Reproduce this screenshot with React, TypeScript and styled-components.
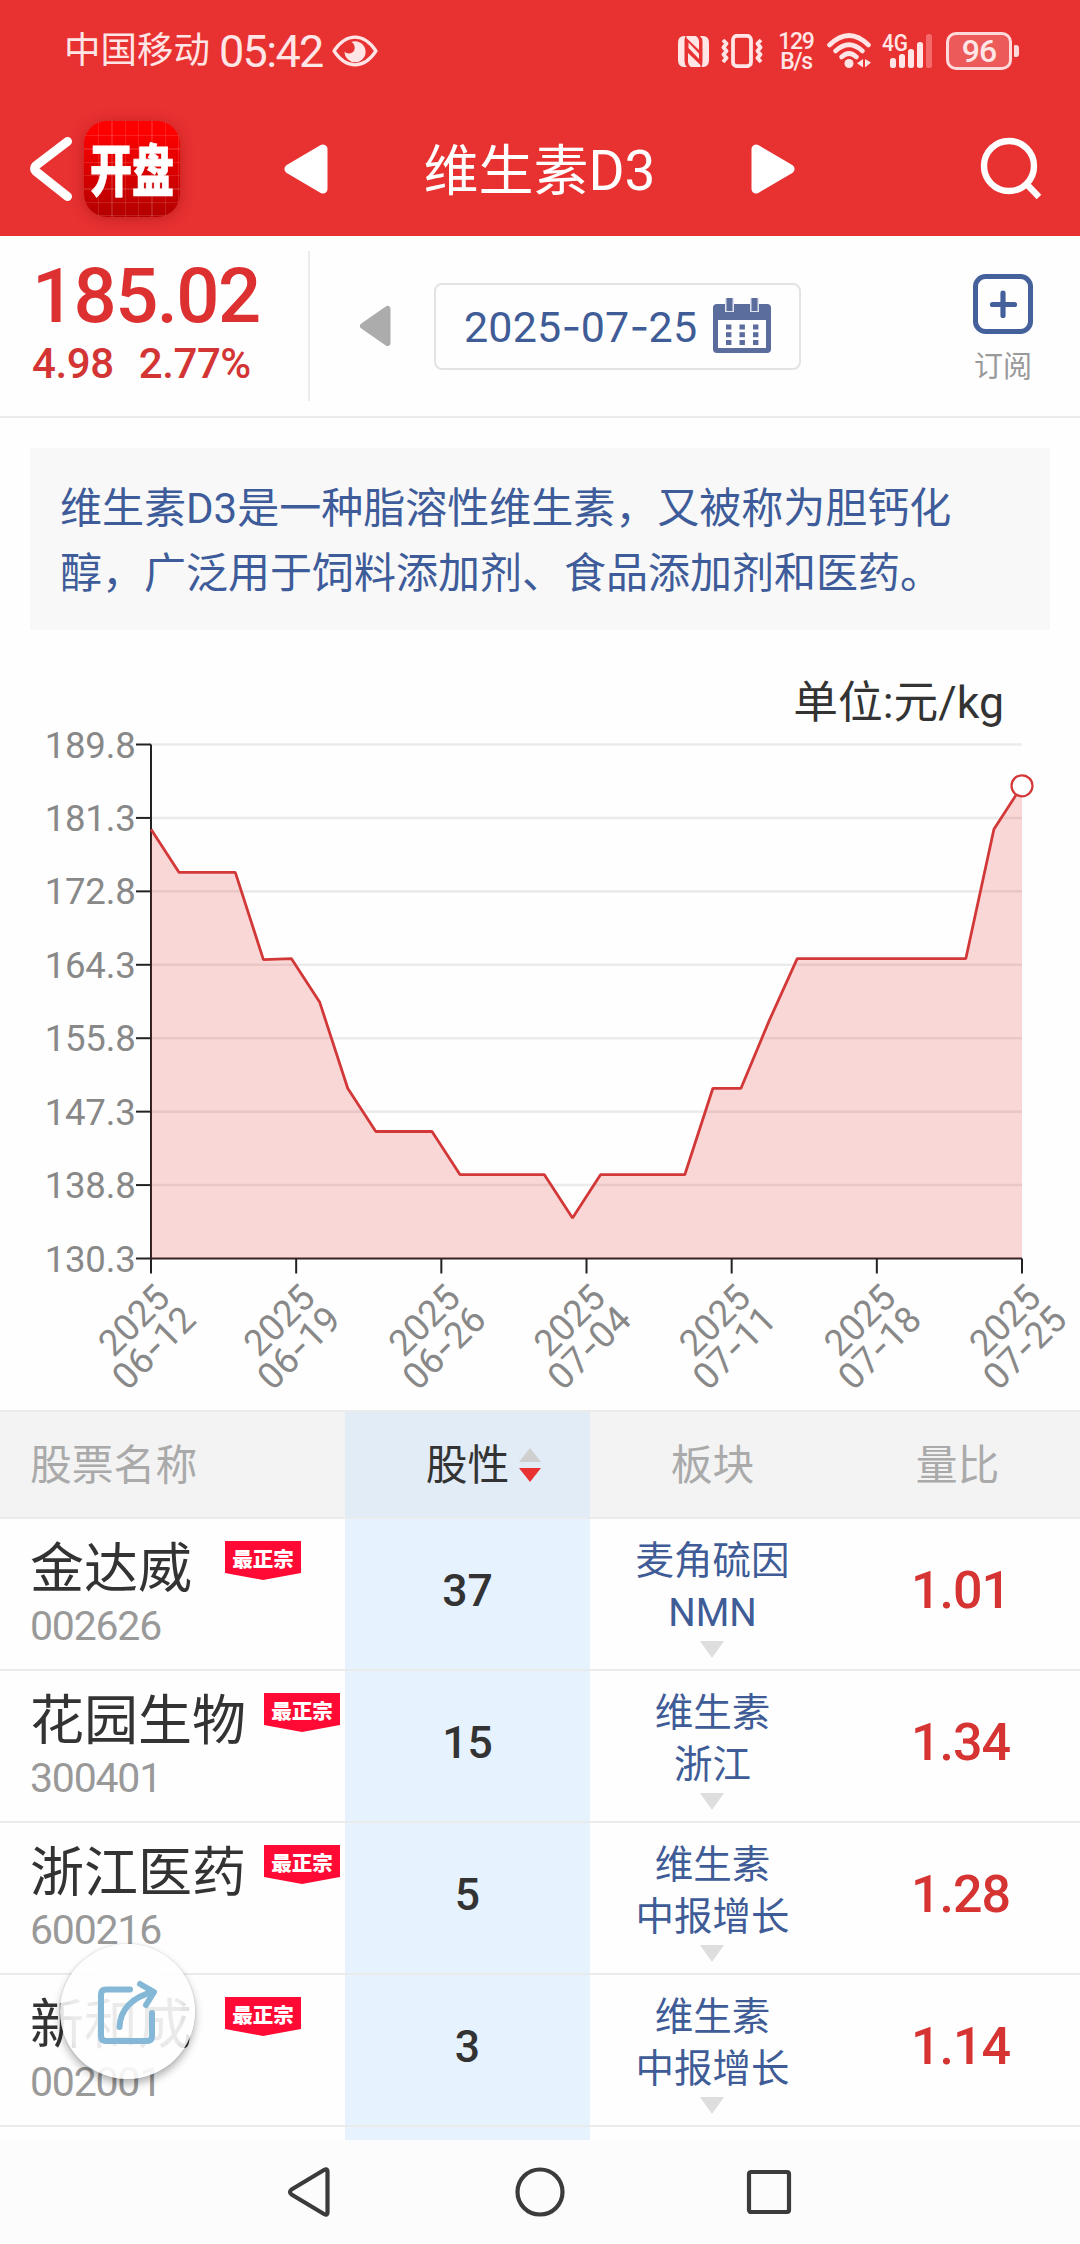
import React from "react";
import styled, { createGlobalStyle } from "styled-components";

const GlobalStyle = createGlobalStyle`
  * { box-sizing: border-box; }
  html, body { margin: 0; padding: 0; background: #fff; }
  body { font-family: Roboto, "Noto Sans CJK SC", sans-serif; color: #333; }
`;

const Page = styled.div`
  position: relative;
  width: 1080px;
  height: 2244px;
  overflow: hidden;
  display: flex;
  flex-direction: column;
  background: #fefefe;
`;

/* ---------- status bar ---------- */

const RedArea = styled.header`
  height: 236px;
  background: #e83131;
  flex: none;
`;

const StatusBar = styled.div`
  height: 102px;
  display: flex;
  justify-content: space-between;
  align-items: center;
  padding: 0 61px 0 64px;
  color: #ffe5e5;
`;

const StatusGroup = styled.div`
  display: flex;
  align-items: center;
`;

const Carrier = styled.span`
  font-size: 36.5px;
  line-height: 44px;
`;

const Clock = styled.span`
  margin-left: 9px;
  font-size: 45px;
  line-height: 44px;
  letter-spacing: -1.7px;
  padding-top: 1px;
`;

const Speed = styled.div`
  width: 36px;
  margin: 2px 13px 0 15px;
  display: flex;
  flex-direction: column;
  align-items: center;
  font-size: 23px;
  font-weight: 500;
  line-height: 20px;
  letter-spacing: -1.3px;
`;

const Battery = styled.div`
  width: 66px;
  height: 38px;
  margin-left: 12px;
  border: 3px solid #ffdada;
  border-radius: 10px;
  background: #ec5a5a;
  display: flex;
  align-items: center;
  justify-content: center;
  font-size: 32px;
  font-weight: 500;
  line-height: 32px;
  letter-spacing: -1px;
`;

const BatteryNub = styled.div`
  width: 5px;
  height: 12px;
  margin-left: 2px;
  border-radius: 1px 3px 3px 1px;
  background: #ffdada;
`;

/* ---------- title bar ---------- */

const TitleBar = styled.div`
  height: 134px;
  display: flex;
  align-items: center;
  justify-content: space-between;
  padding: 0 30px 0 29px;
`;

const TitleSide = styled.div`
  width: 155px;
  display: flex;
  align-items: center;
  gap: 11px;
  &:last-child {
    justify-content: flex-end;
    padding-right: 6px;
  }
`;

const AppLogo = styled.div`
  width: 96px;
  height: 96px;
  border-radius: 23px;
  display: flex;
  align-items: center;
  justify-content: center;
  background:
    repeating-linear-gradient(90deg, transparent 0 12px, rgba(255, 255, 255, 0.12) 12px 13.3px) 2px 0,
    repeating-linear-gradient(180deg, transparent 0 12px, rgba(255, 255, 255, 0.12) 12px 13.3px) 0 2px,
    linear-gradient(180deg, #ff0000 10%, #b60000 95%);
  box-shadow: 0 2px 14px rgba(120, 0, 0, 0.35);
`;

const LogoText = styled.span`
  font-family: "Noto Sans CJK SC", sans-serif;
  font-weight: 900;
  font-size: 42px;
  line-height: 42px;
  color: #fff;
  -webkit-text-stroke: 0.6px #fff;
  transform: translateY(-2px) scaleY(1.32);
`;

const TitleCenter = styled.div`
  width: 512px;
  display: flex;
  align-items: center;
  justify-content: space-between;
`;

const Title = styled.h1`
  margin: 4px 0 0;
  font-size: 55px;
  line-height: 64px;
  font-weight: 400;
  color: #fff;
`;

/* ---------- quote bar ---------- */

const QuoteBar = styled.section`
  height: 182px;
  flex: none;
  display: flex;
  align-items: center;
  border-bottom: 2px solid #ebebeb;
`;

const PriceBlock = styled.div`
  width: 310px;
  height: 150px;
  border-right: 2px solid #ebebeb;
  padding-left: 32px;
  color: #dd3031;
  white-space: pre;
`;

const Price = styled.div`
  margin-top: 5px;
  font-size: 76px;
  line-height: 80px;
  font-weight: 500;
  letter-spacing: -1.6px;
`;

const Change = styled.div`
  margin-top: 5px;
  display: flex;
  gap: 25px;
  font-size: 42px;
  line-height: 46px;
  font-weight: 500;
  letter-spacing: -0.4px;
  color: #d33535;
`;

const PrevDay = styled.svg`
  margin-left: 49px;
  flex: none;
`;

const DateBox = styled.div`
  margin-left: 43px;
  width: 367px;
  height: 87px;
  border: 2px solid #e3e3e3;
  border-radius: 8px;
  display: flex;
  align-items: center;
  padding: 0 28px;
  justify-content: space-between;
  font-size: 43px;
  color: #3f5c97;
  line-height: 48px;
`;

const DateText = styled.span`
  letter-spacing: 0.2px;
`;

const Dash = styled.span`
  font-family: Inter, Roboto, sans-serif;
  letter-spacing: -0.6px;
`;

const Subscribe = styled.div`
  margin-left: 157px;
  width: 90px;
  display: flex;
  flex-direction: column;
  align-items: center;
  gap: 15px;
  font-size: 29px;
  line-height: 36px;
  color: #999;
  padding-top: 6px;
`;

/* ---------- description and chart ---------- */

const Description = styled.p`
  margin: 30px 30px 0;
  height: 182px;
  flex: none;
  padding: 28px 31px 24px 30px;
  background: #f8f8f8;
  color: #3e5c99;
  font-size: 42px;
  line-height: 65px;
`;

const UnitLabel = styled.div`
  height: 90px;
  flex: none;
  padding: 46px 76px 0 0;
  text-align: right;
  font-size: 44.7px;
  line-height: 54px;
  white-space: nowrap;
  color: #333;
`;

const ChartSvg = styled.svg`
  display: block;
  flex: none;
  overflow: visible;
  font-family: Roboto, sans-serif;
  font-size: 36.6px;
`;

/* ---------- table ---------- */

const Table = styled.section`
  flex: 1;
  min-height: 0;
  display: flex;
  flex-direction: column;
  overflow: hidden;
  border-top: 2px solid #ebebeb;
`;

const Row = styled.div<{ $head?: boolean; $tail?: boolean }>`
  flex: none;
  height: ${(p) => (p.$head ? 107 : p.$tail ? 13 : 152)}px;
  display: grid;
  grid-template-columns: 345px 245px 245px 245px;
  background: ${(p) => (p.$head ? "#f3f3f3" : "#fefefe")};
  color: ${(p) => (p.$head ? "#aaa" : "#333")};
  font-size: 41.8px;
  border-bottom: ${(p) => (p.$tail ? 0 : 2)}px solid #ebebeb;
`;

const Cell = styled.div<{ $tint?: string; $start?: boolean }>`
  display: flex;
  align-items: center;
  justify-content: ${(p) => (p.$start ? "flex-start" : "center")};
  padding-left: ${(p) => (p.$start ? 30 : 0)}px;
  background: ${(p) => p.$tint ?? "transparent"};
`;

const HeadLabel = styled.span<{ $active?: boolean }>`
  margin-top: -5px;
  color: ${(p) => (p.$active ? "#333" : "inherit")};
`;

const SortArrows = styled.svg`
  margin: 0 -32px 0 10px;
`;

const StockCell = styled.div`
  display: flex;
  flex-direction: column;
  padding: 17px 0 0 31px;
`;

const NameLine = styled.div`
  display: flex;
  gap: 17px;
  align-items: flex-start;
`;

const StockName = styled.span`
  min-width: 177px;
  padding-top: 3px;
  margin-left: -1px;
  margin-right: 1px;
  font-size: 54px;
  line-height: 62px;
  white-space: nowrap;
`;

const StockCode = styled.span`
  margin-top: 2px;
  font-size: 41px;
  line-height: 46px;
  letter-spacing: -1.2px;
  margin-left: -1px;
  color: #999;
`;

const Flag = styled.span`
  width: 76px;
  height: 39px;
  margin-top: 5px;
  background: #ff0a35;
  clip-path: polygon(0 0, 100% 0, 100% 82%, 50% 100%, 0 82%);
  display: flex;
  justify-content: center;
  padding-top: 3px;
  font-family: "Noto Sans CJK SC", sans-serif;
  font-size: 20.5px;
  line-height: 28px;
  font-weight: 900;
  color: #fff;
`;

const Score = styled.span`
  font-size: 44.5px;
  font-weight: 500;
  margin-top: -7px;
`;

const Ratio = styled.span`
  width: 100px;
  margin: -7px 0 0 7px;
  font-size: 52px;
  font-weight: 500;
  letter-spacing: -1px;
  color: #d63333;
`;

const Sectors = styled.div`
  display: flex;
  flex-direction: column;
  align-items: center;
  padding-top: 16px;
  font-size: 38.5px;
  line-height: 52px;
  color: #3f5c97;
`;

const SectorMore = styled.svg`
  margin-top: 2px;
  margin-right: 2px;
`;

/* ---------- overlay and navigation ---------- */

const ShareButton = styled.button`
  position: absolute;
  left: 60px;
  top: 1944px;
  width: 135px;
  height: 135px;
  padding: 0;
  border: 0;
  border-radius: 50%;
  background: rgba(254, 254, 254, 0.87);
  box-shadow: 0 5px 9px rgba(0, 0, 0, 0.3), 0 0 2px rgba(0, 0, 0, 0.2);
`;

const NavBar = styled.nav`
  height: 104px;
  flex: none;
  background: #fcfcfc;
  display: flex;
  align-items: center;
  justify-content: center;
  gap: 180px;
`;

/* ---------- data ---------- */

const prices = [
  180, 175, 175, 175, 164.9, 165, 160, 150, 145, 145, 145, 140, 140, 140, 140, 135,
  140, 140, 140, 140, 150, 150, 157.8, 165, 165, 165, 165, 165, 165, 165, 180, 185.02,
];
const yTicks = ["189.8", "181.3", "172.8", "164.3", "155.8", "147.3", "138.8", "130.3"];
const xTicks = ["06-12", "06-19", "06-26", "07-04", "07-11", "07-18", "07-25"];

const stocks = [
  { name: "金达威", code: "002626", score: 37, sectors: ["麦角硫因", "NMN"], ratio: "1.01" },
  { name: "花园生物", code: "300401", score: 15, sectors: ["维生素", "浙江"], ratio: "1.34" },
  { name: "浙江医药", code: "600216", score: 5, sectors: ["维生素", "中报增长"], ratio: "1.28" },
  { name: "新和成", code: "002001", score: 3, sectors: ["维生素", "中报增长"], ratio: "1.14" },
];

/* ---------- pieces ---------- */

const EyeSvg = styled.svg`
  margin-left: 9px;
`;

const EyeIcon = () => (
  <EyeSvg width="46" height="34" viewBox="0 0 46 34">
    <path d="M2 17C8 8 15 3.2 23 3.2S38 8 44 17C38 26 31 30.8 23 30.8S8 26 2 17Z" fill="none" stroke="#ffe5e5" strokeWidth="3.2" strokeLinejoin="round" />
    <path d="M21 7.5A10.5 10.5 0 1 1 12.6 17.5C14.5 20.5 21.5 20 22.5 15.5C23 12.5 22.5 10 19.5 8Z" fill="#ffe5e5" />
  </EyeSvg>
);

const NfcIcon = () => (
  <svg width="31" height="33" viewBox="0 0 31 33">
    <path d="M7.500 1H6Q0 1 0 8V25Q0 32 6 32H9Q6.500 30 6.500 26V7Q6.500 3 7.500 1Z" fill="#ffe5e5" />
    <path d="M23.500 32H25Q31 32 31 25V8Q31 1 25 1H22Q24.500 3 24.500 7V26Q24.500 30 23.500 32Z" fill="#ffe5e5" />
    <path d="M8.500 1H18Q21 3 21 7V15L8.500 3ZM22.500 32H13Q10 30 10 26V18L22.500 30Z" fill="#ffe5e5" />
    <path d="M10.500 7.500L21 18.500V24L10.500 13Z" fill="#ffe5e5" />
  </svg>
);

const VibrateSvg = styled.svg`
  margin-left: 12px;
`;

const VibrateIcon = () => (
  <VibrateSvg width="42" height="34" viewBox="0 0 42 34" fill="none" stroke="#ffe5e5">
    <rect x="12" y="1.800" width="18" height="30.400" rx="4" strokeWidth="3.800" />
    <path d="M2 6L5.500 9.500L2.500 13.500L5.500 17L2.500 20.500L5.500 24L2 28M40 6L36.500 9.500L39.500 13.500L36.500 17L39.500 20.500L36.500 24L40 28" strokeWidth="3.800" strokeLinejoin="round" />
  </VibrateSvg>
);

const WifiIcon = () => (
  <svg width="45" height="36" viewBox="0 0 45 36" fill="none" stroke="#ffe5e5" strokeLinecap="round">
    <path d="M2.500 12Q22 -7 41.500 12" strokeWidth="4.600" />
    <path d="M8.500 18Q22 5.500 35.500 18" strokeWidth="4.600" />
    <path d="M14.500 24Q22 17 29.500 24" strokeWidth="4.600" />
    <circle cx="22" cy="30.500" r="4.500" fill="#ffe5e5" stroke="none" />
    <path d="M36 26V34.500L30 30.300ZM38 26V34.500L44 29.500Z" fill="#ffe5e5" stroke="none" />
  </svg>
);

const SignalSvg = styled.svg`
  margin-left: 10px;
  overflow: visible;
`;

const SignalIcon = () => (
  <SignalSvg width="52" height="36" viewBox="0 0 52 36" fill="#ffe5e5">
    <text x="0" y="18" fontSize="24" fontWeight="500" textLength="26" lengthAdjust="spacingAndGlyphs">4G</text>
    <rect x="8" y="25" width="6" height="10" rx="2.500" />
    <rect x="17" y="21" width="6" height="14" rx="2.500" />
    <rect x="26" y="16" width="6" height="19" rx="2.500" />
    <rect x="35" y="9" width="6" height="26" rx="2.500" />
    <rect x="44" y="1" width="6" height="34" rx="2.500" fill="#f46a6a" />
  </SignalSvg>
);

const CalendarIcon = () => (
  <svg width="58" height="56" viewBox="0 0 58 56" fill="#5b6d9c">
    <rect x="0" y="6" width="58" height="49" rx="4" />
    <rect x="5" y="22" width="48" height="28" fill="#fefefe" />
    <path d="M12 0H21V14H12ZM37 0H46V14H37Z" fill="#dfe3ee" />
    <path d="M13.500 0H19.500V13H13.500ZM38.500 0H44.500V13H38.500Z" />
    {[13, 26.5, 40].map((x) =>
      [26.5, 34.2, 42].map((y) => <rect key={`${x}-${y}`} x={x} y={y} width="5.400" height="5" />)
    )}
  </svg>
);

const dashed = (value: string, Tag: React.ElementType) =>
  value.split("-").map((part, i) => (
    <React.Fragment key={i}>
      {i > 0 && <Tag>-</Tag>}
      {part}
    </React.Fragment>
  ));

const TDash = ({ children }: { children?: React.ReactNode }) => (
  <tspan fontFamily="Inter">{children}</tspan>
);

const Chart = () => {
  const left = 151;
  const right = 1022;
  const top = 24.5;
  const bottom = 538.5;
  const px = (i: number) => left + ((right - left) * i) / (prices.length - 1);
  const py = (v: number) => bottom - ((v - 130.3) / 59.5) * (bottom - top);
  const line = prices.map((v, i) => `${px(i).toFixed(1)},${py(v).toFixed(1)}`).join(" L");
  const gap = (bottom - top) / 7;
  const step = (right - left) / 6;
  return (
    <ChartSvg width="1080" height="690" viewBox="0 0 1080 690">
      {yTicks.slice(0, 7).map((t, i) => (
        <line key={t} x1={left} x2={right} y1={top + gap * i} y2={top + gap * i} stroke="#ebebeb" strokeWidth="2.600" />
      ))}
      <path d={`M${left},${top} V${bottom} H${right}`} fill="none" stroke="#222" strokeWidth="2" />
      <path d={`M${line} L${right},${bottom} L${left},${bottom} Z`} fill="rgba(232,49,49,0.19)" />
      {yTicks.map((t, i) => (
        <g key={t}>
          <line x1={left - 15} x2={left} y1={top + gap * i} y2={top + gap * i} stroke="#222" strokeWidth="2" />
          <text x="135.500" y={top + gap * i + 13} textAnchor="end" fill="#888" letterSpacing="-0.2">{t}</text>
        </g>
      ))}
      {xTicks.map((t, i) => (
        <g key={t}>
          <line x1={left + step * i} x2={left + step * i} y1={bottom} y2={bottom + 15} stroke="#222" strokeWidth="2" />
          <g transform={`translate(${left + step * i} ${bottom + 15}) rotate(-45)`} fill="#888" textAnchor="end">
            <text x="-4" y="33.500">2025</text>
            <text x="-1" y="67">{dashed(t, TDash)}</text>
          </g>
        </g>
      ))}
      <path d={`M${line}`} fill="none" stroke="#d33838" strokeWidth="2.800" strokeLinejoin="bevel" />
      <circle cx={right} cy={py(185.02)} r="10.500" fill="#fff" stroke="#d33838" strokeWidth="2.200" />
    </ChartSvg>
  );
};

export default function App() {
  return (
    <>
      <GlobalStyle />
      <Page>
        <RedArea>
          <StatusBar>
            <StatusGroup>
              <Carrier>中国移动</Carrier>
              <Clock>05:42</Clock>
              <EyeIcon />
            </StatusGroup>
            <StatusGroup>
              <NfcIcon />
              <VibrateIcon />
              <Speed>
                <span>129</span>
                <span>B/s</span>
              </Speed>
              <WifiIcon />
              <SignalIcon />
              <Battery>96</Battery>
              <BatteryNub />
            </StatusGroup>
          </StatusBar>
          <TitleBar>
            <TitleSide>
              <svg width="44" height="66" viewBox="0 0 44 66">
                <path d="M38.500 5.500L7 29.500Q4 32.500 7 35.500L38.500 60.500" fill="none" stroke="#fff" strokeWidth="9" strokeLinecap="round" strokeLinejoin="round" />
              </svg>
              <AppLogo>
                <LogoText>开盘</LogoText>
              </AppLogo>
            </TitleSide>
            <TitleCenter>
              <svg width="44" height="50" viewBox="0 0 44 50">
                <path d="M39 5V45L5 25Z" fill="#fff" stroke="#fff" strokeWidth="9" strokeLinejoin="round" />
              </svg>
              <Title>维生素D3</Title>
              <svg width="44" height="50" viewBox="0 0 44 50">
                <path d="M5 5V45L39 25Z" fill="#fff" stroke="#fff" strokeWidth="9" strokeLinejoin="round" />
              </svg>
            </TitleCenter>
            <TitleSide>
              <svg width="64" height="66" viewBox="0 0 64 66" fill="none" stroke="#fff">
                <circle cx="29" cy="30" r="25" strokeWidth="6.400" />
                <path d="M47 48.500L59 61" strokeWidth="6.400" />
              </svg>
            </TitleSide>
          </TitleBar>
        </RedArea>

        <QuoteBar>
          <PriceBlock>
            <Price>185.02</Price>
            <Change>
              <span>4.98</span>
              <span>2.77%</span>
            </Change>
          </PriceBlock>
          <PrevDay width="32" height="42" viewBox="0 0 32 42">
            <path d="M28.500 4V38L4 21Z" fill="#acacac" stroke="#acacac" strokeWidth="6" strokeLinejoin="round" />
          </PrevDay>
          <DateBox>
            <DateText>{dashed("2025-07-25", Dash)}</DateText>
            <CalendarIcon />
          </DateBox>
          <Subscribe>
            <svg width="60" height="60" viewBox="0 0 60 60" fill="none" stroke="#44619b">
              <rect x="2.500" y="2.500" width="55" height="55" rx="10" strokeWidth="5" />
              <path d="M30 19V41.500M19.500 30.500H41.500" strokeWidth="5.200" strokeLinecap="round" />
            </svg>
            <span>订阅</span>
          </Subscribe>
        </QuoteBar>

        <Description>维生素D3是一种脂溶性维生素，又被称为胆钙化醇，广泛用于饲料添加剂、食品添加剂和医药。</Description>
        <UnitLabel>单位:元/kg</UnitLabel>
        <Chart />

        <Table>
          <Row $head>
            <Cell $start>
              <HeadLabel>股票名称</HeadLabel>
            </Cell>
            <Cell $tint="#e1ecf7">
              <HeadLabel $active>股性</HeadLabel>
              <SortArrows width="22" height="34" viewBox="0 0 22 34">
                <path d="M0 14L11 0L22 14Z" fill="#cfcfcf" />
                <path d="M0 20H22L11 34Z" fill="#e83131" />
              </SortArrows>
            </Cell>
            <Cell>
              <HeadLabel>板块</HeadLabel>
            </Cell>
            <Cell>
              <HeadLabel>量比</HeadLabel>
            </Cell>
          </Row>
          {stocks.map((s) => (
            <Row key={s.code}>
              <StockCell>
                <NameLine>
                  <StockName>{s.name}</StockName>
                  <Flag>最正宗</Flag>
                </NameLine>
                <StockCode>{s.code}</StockCode>
              </StockCell>
              <Cell $tint="#e6f2fe">
                <Score>{s.score}</Score>
              </Cell>
              <Sectors>
                {s.sectors.map((name) => (
                  <span key={name}>{name}</span>
                ))}
                <SectorMore width="24" height="17" viewBox="0 0 24 17">
                  <path d="M0 0H24L12 17Z" fill="#dedede" />
                </SectorMore>
              </Sectors>
              <Cell>
                <Ratio>{s.ratio}</Ratio>
              </Cell>
            </Row>
          ))}
          <Row $tail>
            <Cell />
            <Cell $tint="#e6f2fe" />
            <Cell />
            <Cell />
          </Row>
        </Table>

        <NavBar>
          <svg width="50" height="52" viewBox="0 0 50 52">
            <path d="M42.500 5.500V46.500Q42.500 50 39 48L6.500 28.500Q3.500 26 6.500 23.500L39 4Q42.500 2 42.500 5.500Z" fill="none" stroke="#3b3b3b" strokeWidth="4.200" strokeLinejoin="round" />
          </svg>
          <svg width="50" height="52" viewBox="0 0 50 52">
            <circle cx="25" cy="26" r="22.500" fill="none" stroke="#3b3b3b" strokeWidth="4.200" />
          </svg>
          <svg width="50" height="52" viewBox="0 0 50 52">
            <rect x="4" y="6" width="40" height="40" rx="2" fill="none" stroke="#3b3b3b" strokeWidth="4.200" />
          </svg>
        </NavBar>

        <ShareButton aria-label="share">
          <svg width="135" height="135" viewBox="0 0 135 135" fill="none" stroke="#84b8d6" strokeWidth="6" strokeLinecap="round" strokeLinejoin="round">
            <path d="M43 20H91L121 50V96L91 129H43L11 96V50Z" fill="#fff" fillOpacity="0.25" stroke="none" />
            <path d="M70 45.500H46Q41 45.500 41 50.500V92Q41 97 46 97H87Q92 97 92 92V69" />
            <path d="M59.500 83C60 66 72 53 93 48" />
            <path d="M80 40L94 48L86 61" />
          </svg>
        </ShareButton>
      </Page>
    </>
  );
}
